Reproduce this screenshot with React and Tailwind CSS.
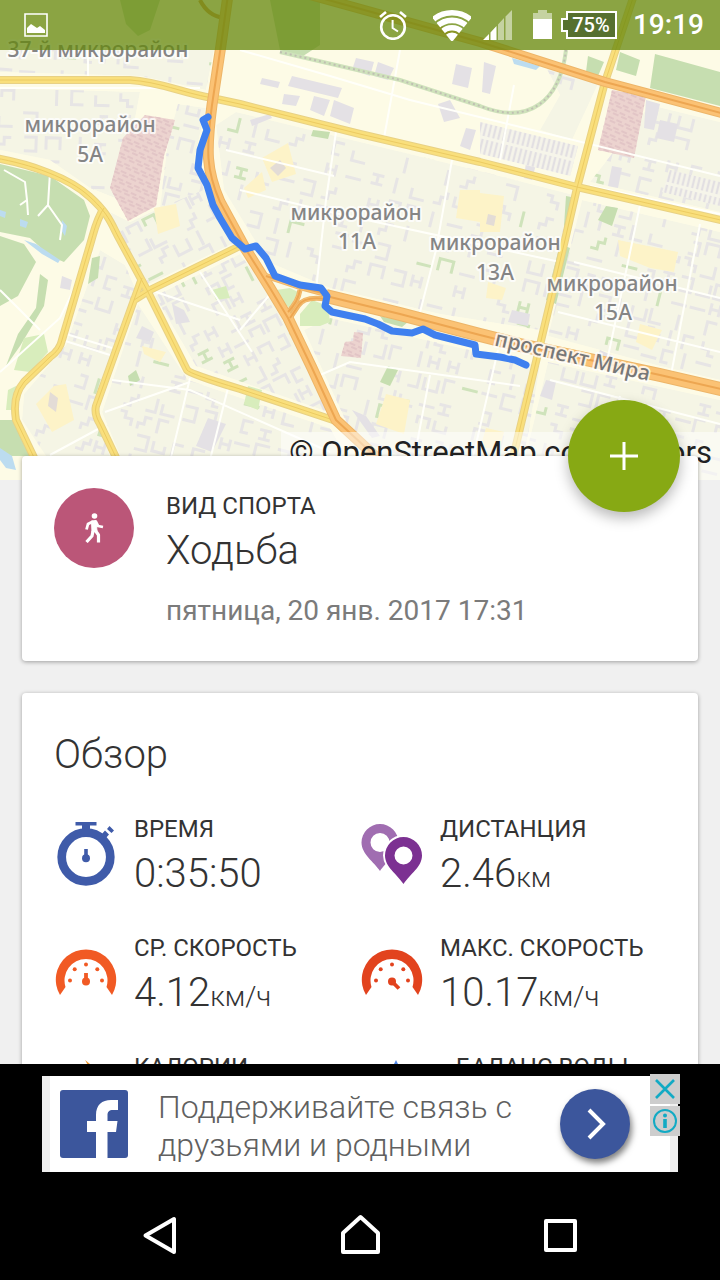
import clsx from 'clsx';

const BUILDING_SHAPES = [
  'M0 0H14V10',
  'M0 0V14H12',
  'M0 12V0H14V12',
  'M0 5H16',
  'M4 0V16',
  'M0 0V12M9 0V12M0 6H9',
  'M12 0H2V12H9',
  'M0 0H6V6H13V13'
];

const DISTRICTS = [
  { clip: '236,112 480,171 574,195 540,330 440,314 330,288 268,262 224,190 216,125', angle: 14, x: 200, y: 40, cols: 20, rows: 16, step: 22, seed: 7 },
  { clip: '582,200 720,232 720,380 660,366 548,336', angle: 14, x: 560, y: 50, cols: 12, rows: 16, step: 19, seed: 19 },
  { clip: '330,318 540,366 520,480 400,480 350,430 304,330', angle: 14, x: 300, y: 220, cols: 14, rows: 14, step: 20, seed: 31 },
  { clip: '548,362 720,400 720,480 520,480', angle: 14, x: 560, y: 220, cols: 12, rows: 14, step: 20, seed: 5 },
  { clip: '155,296 240,254 282,310 328,412 196,366', angle: -27, x: 60, y: 340, cols: 14, rows: 14, step: 19, seed: 13 },
  { clip: '138,304 188,380 330,428 360,480 130,480 102,412', angle: 14, x: 140, y: 250, cols: 14, rows: 14, step: 20, seed: 23 },
  { clip: '66,345 100,250 125,265 136,290 94,408 110,456 46,456 22,420 24,394', angle: 17, x: 60, y: 220, cols: 10, rows: 14, step: 20, seed: 43 },
  { clip: '110,212 130,222 206,186 236,242 145,286', angle: -27, x: 60, y: 260, cols: 11, rows: 8, step: 18, seed: 3 },
  { clip: '0,88 140,92 120,200 90,188 50,160 0,150', angle: 2, x: 0, y: 88, cols: 8, rows: 5, step: 24, seed: 37 },
  { clip: '0,50 214,50 206,90 140,76 0,72', angle: 4, x: 0, y: 44, cols: 12, rows: 2, step: 21, seed: 11 },
  { clip: '178,104 206,108 194,160 204,190 160,208 168,140', angle: 14, x: 180, y: 60, cols: 5, rows: 8, step: 19, seed: 29 },
  { clip: '650,105 720,122 720,212 590,182', angle: 14, x: 640, y: -20, cols: 8, rows: 11, step: 24, seed: 17 },
  { clip: '545,65 598,84 572,140 540,130 560,95', angle: 14, x: 560, y: -90, cols: 4, rows: 9, step: 20, seed: 51 }
];

const YELLOW_ROADS = [
  'M-5 80H130C160 82 180 92 212 98L240 104L360 134L480 162L577 187L725 221',
  'M634 -5L605 82L577 188L565 240L540 345L510 470',
  'M-5 158C30 164 70 178 90 197C110 215 112 226 120 240L147 290L187 370Q190 374 240 389L336 421',
  'M104 208C96 220 94 232 90 245L62 340Q60 350 50 357L24 382Q12 396 16 420L40 470',
  'M244 244L150 290L134 300L96 406Q94 414 100 424L122 470',
  'M142 278L134 300'
];

const ORANGE_ROADS = [
  { d: 'M310 -5L480 42L605 82L725 114', width: 8 },
  { d: 'M228 -5L221 45L212 105C206 150 206 170 220 202L245 248L270 288L288 318L312 368L336 420L390 470', width: 9 },
  { d: 'M326 296L400 314L480 335L520 345L660 375L725 390', width: 12 },
  { d: 'M266 276L300 287L326 294', width: 4 },
  { d: 'M326 299Q304 296 298 306L290 318M300 290Q298 302 288 312', width: 3 }
];

const SIDE_STREETS = [
  'M88 50V80', 'M0 88H200', 'M336 132L326 200L316 290', 'M452 160L436 250L418 320', 'M240 190L330 212L560 262',
  'M226 150L334 176', 'M640 205L620 300L606 366', 'M700 224L670 380', 'M320 375L350 362L520 386', 'M430 375L410 480',
  'M498 350L470 470', 'M190 378L168 470', 'M228 388L210 460', 'M105 412L190 382', 'M62 340L110 355', 'M66 334L112 348',
  'M112 380L190 390L330 452', 'M240 330L272 292', 'M50 455L100 428', 'M550 380L720 424', 'M620 396L606 480',
  'M590 186L720 214', 'M574 262L720 298', 'M558 312L720 352', 'M0 290L40 330', 'M0 372L60 318L92 252',
  'M4 170L25 182L27 200L20 205M27 200L28 215', 'M50 172L48 205L62 225L60 240M48 205L38 216', 'M150 290L240 320', 'M200 272L252 352',
  'M240 50L330 76L410 100L720 176', 'M514 85L500 160', 'M400 50L384 138'
];

const PARKS = [
  'M0 164L50 176L84 200L90 216L84 240L64 262L50 256L30 238L0 232Z',
  'M0 236L24 244L36 262L18 296L0 306Z',
  'M40 274L48 280L44 306L20 346L6 366L18 334L36 308Z',
  'M0 420L14 420L36 456L0 456Z',
  'M655 54L720 72V106L650 88Z',
  'M120 0H160L150 30L138 36L126 24Z',
  'M270 0H320V45L300 58L280 50L276 30Z',
  'M566 196L576 198L572 225L564 226Z',
  'M560 244L570 248L556 304L546 300Z',
  'M588 56L604 62L598 76L586 72Z',
  'M620 52L640 60L636 76L616 70Z',
  'M92 258L100 256L98 278L88 284Z',
  'M128 376L136 370L140 380L130 386Z',
  'M388 366L398 370L390 386L380 382Z',
  'M380 316L408 322L402 327L384 322Z',
  'M606 206L618 208L612 226L598 220Z',
  'M313 130L330 132L328 139L311 136Z',
  'M396 398L410 400L408 406L394 404Z'
];

const LAWNS = [
  'M24 338L44 334L48 352L30 372L14 370Z', 'M8 390L16 386V410H6Z',
  'M276 290L290 288L298 292L290 308L284 304Z', 'M300 314L312 300L328 306L330 322L320 326L300 326Z',
  'M212 290L226 286L230 298L216 300Z', 'M248 386L262 390L258 410L244 404Z'
];

const PINK_AREAS = [
  'M145 115L175 120L164 156L156 206L128 221L110 188L123 138Z',
  'M612 90L646 96L634 158L598 150Z',
  'M354 332L363 333L361 358L341 356L345 342L353 341Z'
];

const CREAM_AREAS = [
  'M262 158L288 143L296 174L272 182Z', 'M244 188L262 172L266 190L248 198Z', 'M460 190L480 190V222L456 218Z',
  'M480 193L504 196L500 232L480 232Z', 'M618 240L678 252L674 272L650 268L620 256Z', 'M386 394L410 400L404 434L376 424Z',
  'M54 386L66 384L74 420L52 432L36 404Z', 'M154 208L176 204L180 226L158 234Z', 'M488 282L506 288L502 300L486 298Z',
  'M142 346L166 352L160 362L144 354Z', 'M486 428L504 432L500 448H480Z', 'M640 324L662 330L652 350L636 342Z'
];

const LARGE_BUILDINGS = [
  'M292 76L342 88L338 98L288 86Z', 'M314 96L330 100L324 116L310 110Z', 'M334 100L354 108L350 124L330 116Z',
  'M284 94L300 96L296 106L282 104Z', 'M262 78L280 82L278 88L260 84Z', 'M356 58L374 62L370 76L352 70Z',
  'M378 62L394 68L388 80L374 76Z', 'M456 64L472 68L468 88L452 84Z', 'M438 104L450 100L460 118L444 122Z',
  'M466 128L476 130L470 150L460 146Z', 'M484 62L496 66L490 94L482 92Z', 'M646 100L660 104L654 130L644 128Z',
  'M660 120L678 124L674 142L656 138Z', 'M528 146L540 148L532 180L524 178Z', 'M612 166L622 168L618 188L608 186Z',
  'M208 418L226 424L212 452L196 446Z', 'M142 326L154 332L150 342L136 338Z', 'M62 276L72 280L70 290L60 288Z',
  'M172 304L184 310L190 322L176 324Z', 'M250 120L270 114L272 118L252 126Z', 'M512 310L530 314L528 326L508 322Z',
  'M352 410L366 416L380 436L372 438Z', 'M546 380L556 382L552 400L540 396Z', 'M600 350L614 356L610 364L596 362Z'
];

const WATER = ['M24 240L36 244L60 260L58 263L42 254Z', 'M0 448L12 456L16 470L6 468L0 460Z', 'M20 219L28 222L26 228L20 226Z', 'M62 220L67 226L65 236L61 230Z', 'M0 210L6 212L5 218L0 216Z', 'M512 58L540 66L536 70L514 64Z'];

const TRACK =
  'M208 117L203 120L207 130L200 150L198 168L207 185L213 205L220 218L232 238L245 249L256 246L266 258L275 276L300 285L321 288L327 296L325 306L332 312L365 319L378 324L392 331L412 333L423 329L435 335L475 345L476 354L500 357L515 360L526 365';

const MAP_LABELS = [
  { text: '37-й микрорайон', x: 98, y: 57 },
  { text: 'микрорайон', x: 90, y: 132 },
  { text: '5А', x: 90, y: 162 },
  { text: 'микрорайон', x: 356, y: 220 },
  { text: '11А', x: 357, y: 249 },
  { text: 'микрорайон', x: 495, y: 250 },
  { text: '13А', x: 495, y: 280 },
  { text: 'микрорайон', x: 612, y: 291 },
  { text: '15А', x: 613, y: 320 }
];

function createRandom(seed) {
  let value = seed * 7919;
  return () => {
    value = (value * 1103515245 + 12345) % 2147483648;
    return value / 2147483648;
  };
}

function District({ district, id }) {
  const { clip, angle, x, y, cols, rows, step, seed } = district;
  const random = createRandom(seed);
  const shapes = [];

  for (let row = 0; row < rows; row += 1) {
    for (let col = 0; col < cols; col += 1) {
      const shape = BUILDING_SHAPES[Math.floor(random() * BUILDING_SHAPES.length)];
      const turn = Math.floor(random() * 4) * 90;
      const tone = random();
      if (tone > 0.8) {
        continue;
      }
      shapes.push(
        <path
          key={`${row}-${col}`}
          d={shape}
          transform={`translate(${col * step} ${row * step}) rotate(${turn} 7 7)`}
          stroke={tone < 0.06 ? '#cfe3bb' : '#e7e5e5'}
        />
      );
    }
  }

  return (
    <g>
      <clipPath id={id}>
        <polygon points={clip} />
      </clipPath>
      <g clipPath={`url(#${id})`}>
        <polygon points={clip} fill="#f5f5e5" />
        <g transform={`translate(${x} ${y}) rotate(${angle})`} fill="none" strokeWidth="3">
          {shapes}
        </g>
      </g>
    </g>
  );
}

function RouteMap() {
  return (
    <svg viewBox="0 0 720 480" preserveAspectRatio="xMidYMid slice" className="block h-full w-full" role="img" aria-label="Карта маршрута">
      <defs>
        <pattern id="garages" width="5" height="18" patternUnits="userSpaceOnUse" patternTransform="rotate(14)">
          <path d="M2 0V15" stroke="#e2dfe2" strokeWidth="2.4" />
        </pattern>
        <pattern id="cemetery" width="9" height="8" patternUnits="userSpaceOnUse" patternTransform="rotate(24)">
          <path d="M0 3H6M3 6H9" stroke="#e2c5c6" strokeWidth="2" />
        </pattern>
      </defs>

      <rect width="720" height="480" fill="#fdfbe6" />
      {DISTRICTS.map((district, index) => (
        <District key={district.seed} district={district} id={`district-${index}`} />
      ))}

      <path d={PARKS.join('')} fill="#c6deb0" />
      <path d={LAWNS.join('')} fill="#d8edbc" />
      <path d={CREAM_AREAS.join('')} fill="#fdf3c8" />
      <path d={LARGE_BUILDINGS.join('')} fill="#e4e1e5" />
      <path d="M270 168L280 160L286 168L278 176ZM50 392L58 398L56 412L48 406ZM488 214L496 216L494 226L486 224Z" fill="#e3dcd6" />
      <path d={PINK_AREAS.join('')} fill="#ecd3cf" />
      <path d={PINK_AREAS.join('')} fill="url(#cemetery)" />
      <path d={WATER.join('')} fill="#bcdcf0" />
      <path d="M480 122L578 146L570 176L480 154ZM670 170L720 182V206L662 192Z" fill="#f6f5ea" />
      <path d="M480 122L578 146L570 176L480 154ZM670 170L720 182V206L662 192Z" fill="url(#garages)" />

      <path d={SIDE_STREETS.join('')} fill="none" stroke="#fffffa" strokeWidth="2" />
      <path d="M280 52L400 80L480 106C530 126 560 100 566 50" fill="none" stroke="#cfe2bb" strokeWidth="4" />
      <path d="M280 52L400 80L480 106C530 126 560 100 566 50" fill="none" stroke="#bfbfb2" strokeWidth="2" strokeDasharray="2 3" />
      <path d="M200 0Q208 16 224 18" fill="none" stroke="#d99a50" strokeWidth="4" />

      <g fill="none" strokeLinejoin="round">
        {YELLOW_ROADS.map((d) => (
          <path key={d} d={d} stroke="#e8d184" strokeWidth="8" />
        ))}
        {YELLOW_ROADS.map((d) => (
          <path key={d} d={d} stroke="#f9df7c" strokeWidth="6" />
        ))}
        {YELLOW_ROADS.map((d) => (
          <path key={d} d={d} stroke="#eccb62" strokeWidth="1" />
        ))}
        {ORANGE_ROADS.map(({ d, width }) => (
          <path key={d} d={d} stroke="#edb568" strokeWidth={width + 2} />
        ))}
        {ORANGE_ROADS.map(({ d, width }) => (
          <path key={d} d={d} stroke="#fbc274" strokeWidth={width} />
        ))}
        {ORANGE_ROADS.map(({ d }) => (
          <path key={d} d={d} stroke="#eda651" strokeWidth="2" />
        ))}
        <path d={TRACK} stroke="#3f80ef" strokeWidth="7" strokeLinecap="round" />
      </g>

      <g
        className="font-['Noto_Sans',sans-serif] text-[21px] font-medium"
        fill="#858585"
        stroke="#ffffff"
        strokeOpacity="0.8"
        strokeWidth="4"
        strokeLinejoin="round"
        paintOrder="stroke"
        textAnchor="middle"
      >
        {MAP_LABELS.map(({ text, x, y }) => (
          <text key={`${text}-${x}`} x={x} y={y}>
            {text}
          </text>
        ))}
        <text transform="translate(571 363) rotate(13)" fill="#777777">
          проспект Мира
        </text>
      </g>
    </svg>
  );
}

function StatusBar() {
  return (
    <header className="absolute inset-x-0 top-0 flex h-[50px] items-center bg-[#64870c]/75 px-4 text-white">
      <svg viewBox="0 0 24 24" className="ml-2 h-6 w-6" fill="none">
        <path d="M1 1H23V23H1Z" stroke="#fff" strokeWidth="1.6" />
        <path d="M3 20V15L7 11L13 15L16 13L21 17V20Z" fill="#fff" />
      </svg>

      <svg viewBox="0 0 28 30" className="ml-auto h-[30px] w-7" fill="none" stroke="#fff">
        <circle cx="14" cy="17" r="11.8" strokeWidth="2.6" />
        <path d="M13.6 10V18L19 21.5" strokeWidth="2" />
        <path d="M1 7L7 2M27 7L21 2" strokeWidth="2.6" />
      </svg>

      <svg viewBox="0 0 38 32" className="ml-[26px] h-8 w-[38px]">
        <clipPath id="wifi-fan">
          <path d="M19 33L-2 7V0H40V7Z" />
        </clipPath>
        <g clipPath="url(#wifi-fan)" fill="none" stroke="#fff" strokeWidth="5.6">
          <circle cx="19" cy="33" r="29.2" />
          <circle cx="19" cy="33" r="21.6" />
          <circle cx="19" cy="33" r="14.2" />
          <circle cx="19" cy="33" r="4.8" strokeWidth="9.6" />
        </g>
      </svg>

      <svg viewBox="0 0 30 30" className="ml-3 h-[30px] w-[30px]" fill="#fff">
        <path d="M0 30L6 24V30ZM7.500 22.500L13.500 16V30H7.500Z" />
        <path d="M15 14.500L21 8V30H15ZM22.500 6.500L29 0V30H22.500Z" opacity="0.5" />
      </svg>

      <svg viewBox="0 0 20 30" className="ml-5 h-[30px] w-5" fill="#fff">
        <path d="M0 3H5V0H14V3H19V9H0Z" opacity="0.5" />
        <path d="M0 9H19V29H0Z" />
      </svg>

      <div className="relative ml-2 flex h-7 w-14 items-center justify-center pl-1">
        <svg viewBox="0 0 56 28" className="absolute inset-0 h-7 w-14">
          <path d="M6 1H55V27H6V20H1V8H6Z" fill="#56702f" stroke="#fff" strokeWidth="2" />
        </svg>
        <span className="relative text-[20px] leading-7 font-medium">75%</span>
      </div>

      <time className="ml-4 text-[28px] leading-8 font-medium">19:19</time>
    </header>
  );
}

function StopwatchIcon() {
  return (
    <svg viewBox="0 0 64 64" className="h-16 w-16 overflow-visible" fill="#3f5ba9">
      <circle cx="32" cy="36" r="24.3" fill="none" stroke="#3f5ba9" strokeWidth="8.700" />
      <path d="M21.500 1H42.500V4.500H36V10H28V4.500H21.500Z" />
      <path d="M47 14L51 9.500L55 13.500L51 18ZM53 8L55.500 5L60 9.500L57.500 12Z" />
      <path d="M30.200 28H33.800V36H30.200Z" />
      <circle cx="32" cy="37.300" r="4" />
    </svg>
  );
}

function PinsIcon() {
  return (
    <svg viewBox="0 0 64 64" className="h-16 w-16" fillRule="evenodd">
      <path
        d="M20 50C14 41 1.500 33 1.500 21.500A18.500 18.500 0 0 1 38.500 21.500C38.500 33 26 41 20 50ZM20 12A9.500 9.500 0 1 0 20 31A9.500 9.500 0 1 0 20 12Z"
        fill="#a06db1"
      />
      <path d="M43.500 63C37 53 25 46 25 34.500A18.500 18.500 0 0 1 62 34.500C62 46 50 53 43.500 63Z" fill="#fff" stroke="#fff" strokeWidth="4" />
      <path
        d="M43.500 63C37 53 25 46 25 34.500A18.500 18.500 0 0 1 62 34.500C62 46 50 53 43.500 63ZM43.500 25.500A9 9 0 1 0 43.500 43.500A9 9 0 1 0 43.500 25.500Z"
        fill="#7c3192"
      />
    </svg>
  );
}

function GaugeIcon({ max }) {
  return (
    <svg viewBox="0 0 64 64" className={clsx('h-16 w-16', max ? 'text-[#e2431e]' : 'text-[#f15a24]')} fill="currentColor">
      <path d="M6 55A30.200 30.200 0 1 1 58 55L52.500 47A21.500 21.500 0 1 0 11.500 47Z" />
      <circle cx="16" cy="40.500" r="2" />
      <circle cx="20.700" cy="29.300" r="2" />
      <circle cx="32" cy="24.500" r="2" />
      <circle cx="43.300" cy="29.300" r="2" />
      <circle cx="48" cy="40.500" r="2" />
      <circle cx="32" cy="41.500" r="4" />
      <path d={max ? 'M32 41.500L39 48.500' : 'M32 41.500V33'} stroke="currentColor" strokeWidth="3.800" />
    </svg>
  );
}

function FlameIcon() {
  return (
    <svg viewBox="0 0 64 64" className="h-16 w-16" fill="#f29a2e">
      <path d="M31 1C44 10 50 24 50 40A18 20 0 0 1 14 40C14 28 24 22 31 16Q37 10 31 1Z" />
    </svg>
  );
}

function DropIcon() {
  return (
    <svg viewBox="0 0 80 64" className="h-16 w-20" fill="#4f86e8">
      <path d="M36 1C42 14 54 28 54 42A18 20 0 0 1 18 42C18 28 30 14 36 1Z" />
    </svg>
  );
}

const STATS = [
  { label: 'ВРЕМЯ', value: '0:35:50', icon: <StopwatchIcon /> },
  { label: 'ДИСТАНЦИЯ', value: '2.46', unit: 'км', icon: <PinsIcon /> },
  { label: 'СР. СКОРОСТЬ', value: '4.12', unit: 'км/ч', icon: <GaugeIcon /> },
  { label: 'МАКС. СКОРОСТЬ', value: '10.17', unit: 'км/ч', icon: <GaugeIcon max /> },
  { label: 'КАЛОРИИ', icon: <FlameIcon /> },
  { label: 'БАЛАНС ВОДЫ', icon: <DropIcon /> }
];

function Stat({ stat }) {
  return (
    <div className="flex items-start gap-4">
      <div className="mt-3 shrink-0">{stat.icon}</div>
      <dl className="whitespace-nowrap">
        <dt className="text-[24px] leading-10">{stat.label}</dt>
        {stat.value ? (
          <dd className="mt-px text-[40px] leading-[48px] font-light">
            {stat.value}
            {stat.unit ? <span className="text-[28px] leading-none">{stat.unit}</span> : null}
          </dd>
        ) : null}
      </dl>
    </div>
  );
}

function SportCard() {
  return (
    <section className="relative mx-[22px] -mt-6 flex gap-8 rounded-[4px] bg-white p-8 shadow-[0_1px_4px_rgba(0,0,0,0.35)]">
      <div className="flex h-20 w-20 shrink-0 items-center justify-center rounded-full bg-[#bb5678]">
        <svg viewBox="0 0 20 30" className="h-[30px] w-5" fill="none" stroke="#fff" strokeLinejoin="round">
          <circle cx="10.500" cy="3" r="2.800" fill="#fff" stroke="none" />
          <path d="M7.500 8L12 7.500L13 18L8 19Z" fill="#fff" strokeWidth="1" />
          <path d="M9 8.500L4 11L2.500 16.500M11.500 8L14 13L19 14" strokeWidth="2.800" />
          <path d="M9 18L8 23L2.500 29M11 17L14.500 22V29.500" strokeWidth="3.200" />
        </svg>
      </div>
      <div className="min-w-0">
        <h2 className="text-[24px] leading-9">ВИД СПОРТА</h2>
        <p className="mt-[3px] text-[40px] leading-[48px] font-light">Ходьба</p>
        <p className="mt-[18px] text-[28px] leading-9 text-[#7b7b7b]">пятница, 20 янв. 2017 17:31</p>
      </div>
      <button
        type="button"
        aria-label="Добавить"
        className="absolute -top-14 right-[18px] flex h-28 w-28 items-center justify-center rounded-full bg-[#87a914] shadow-[0_6px_14px_rgba(0,0,0,0.28)]"
      >
        <svg viewBox="0 0 28 28" className="h-7 w-7" stroke="#fff" strokeWidth="3">
          <path d="M14 0V28M0 14H28" />
        </svg>
      </button>
    </section>
  );
}

function OverviewCard() {
  return (
    <section className="mx-[22px] mt-8 rounded-[4px] bg-white px-8 pt-[38px] pb-8 shadow-[0_1px_4px_rgba(0,0,0,0.35)]">
      <h2 className="text-[40px] leading-[48px] font-light">Обзор</h2>
      <div className="-mr-8 mt-[30px] grid grid-cols-[306fr_338fr] gap-y-[30px]">
        {STATS.map((stat) => (
          <Stat key={stat.label} stat={stat} />
        ))}
      </div>
    </section>
  );
}

function AdBanner() {
  return (
    <aside className="bg-black px-[42px] py-3">
      <div className="relative border-x-8 border-[#efefef] bg-white">
        <a href="#facebook" className="flex h-24 items-center pr-10 pl-[10px]">
          <svg viewBox="0 0 68 68" className="h-[68px] w-[68px] shrink-0">
            <rect width="68" height="68" rx="3" fill="#3c569c" />
            <path
              d="M36 68V42H27V31H36V25C36 15 42 10 51 10H58V20H53C49 20 47.500 22 47.500 25V31H57.500L56 42H47.500V68Z"
              fill="#fff"
            />
          </svg>
          <span className="mt-1 ml-[30px] flex-1 text-[32px] leading-[38px] font-light text-[#606060]">
            Поддерживайте связь с друзьями и родными
          </span>
          <span className="flex h-[70px] w-[70px] shrink-0 items-center justify-center rounded-full bg-[#3c569c] shadow-[2px_4px_6px_rgba(0,0,0,0.5)]">
            <svg viewBox="0 0 20 32" className="ml-1 h-8 w-5" fill="none" stroke="#fff" strokeWidth="4">
              <path d="M2 2L16 16L2 30" />
            </svg>
          </span>
        </a>
        <div className="absolute -top-0.5 -right-[10px] flex flex-col gap-0.5">
          <button type="button" aria-label="Закрыть" className="flex h-[30px] w-[30px] items-center justify-center bg-[#cdcdcd]">
            <svg viewBox="0 0 20 20" className="h-5 w-5" stroke="#12aac4" strokeWidth="2.600">
              <path d="M1 1L19 19M19 1L1 19" />
            </svg>
          </button>
          <button type="button" aria-label="Об объявлении" className="flex h-[30px] w-[30px] items-center justify-center bg-[#cdcdcd]">
            <svg viewBox="0 0 24 24" className="h-6 w-6" fill="none" stroke="#12aac4">
              <circle cx="12" cy="12" r="11" strokeWidth="2" />
              <circle cx="12" cy="6.500" r="2" fill="#12aac4" stroke="none" />
              <path d="M12 10V19" strokeWidth="3.600" />
            </svg>
          </button>
        </div>
      </div>
    </aside>
  );
}

const NAV_BUTTONS = [
  { label: 'Назад', d: 'M9.500 27.500L38 11V44Z' },
  { label: 'Домой', d: 'M7 44V25L24.500 9L42 25V44Z' },
  { label: 'Недавние', d: 'M10 13H39V42H10Z' }
];

function NavigationBar() {
  return (
    <nav className="grid h-24 grid-cols-3 items-center bg-black px-[60px]">
      {NAV_BUTTONS.map(({ label, d }) => (
        <button key={label} type="button" aria-label={label} className="flex justify-center">
          <svg viewBox="0 0 48 48" className="h-12 w-12" fill="none" stroke="#fff" strokeWidth="4" strokeLinejoin="round">
            <path d={d} />
          </svg>
        </button>
      ))}
    </nav>
  );
}

export default function App() {
  return (
    <div className="flex h-screen flex-col bg-[#f0f0f0] font-['Roboto',sans-serif] text-[#333333]">
      <main className="min-h-0 flex-1 overflow-hidden">
        <div className="relative h-[480px] overflow-hidden">
          <RouteMap />
          <StatusBar />
          <p className="absolute right-0 bottom-0 h-12 bg-white/50 px-2 text-[31px] leading-[42px] text-[#222222]">
            © OpenStreetMap contributors
          </p>
        </div>
        <SportCard />
        <OverviewCard />
      </main>
      <AdBanner />
      <NavigationBar />
    </div>
  );
}
